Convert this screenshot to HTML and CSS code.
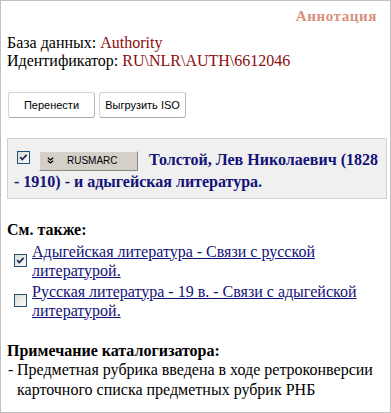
FILE: index.html
```html
<!DOCTYPE html>
<html lang="ru">
<head>
    <meta charset="UTF-8">
    <title>Аннотация</title>
    <link rel="stylesheet" href="styles.css">
</head>
<body>
    <div class="page">
        <div class="head">Аннотация</div>

        <div class="info">
            База данных: <span class="val">Authority</span><br>
            Идентификатор: <span class="val">RU\NLR\AUTH\6612046</span>
        </div>

        <div class="actions">
            <button class="btn">Перенести</button>
            <button class="btn">Выгрузить ISO</button>
        </div>

        <div class="record"><span class="cb cb-on"><svg width="11" height="11" viewBox="0 0 11 11"><path d="M2.2 5.2 L4.3 7.5 L8.6 2.8" fill="none" stroke="#1b2f55" stroke-width="1.8"/></svg></span><span class="marc"><svg class="chev" width="7" height="7" viewBox="0 0 7 7"><path d="M0.8 0.8 L3.5 3 L6.2 0.8 M0.8 3.8 L3.5 6 L6.2 3.8" fill="none" stroke="#000" stroke-width="1.2"/></svg><span>RUSMARC</span></span><span class="title">Толстой, Лев Николаевич (1828 - 1910) - и адыгейская литература.</span></div>

        <div class="sub">См. также:</div>
        <div class="rel">
            <div class="rel-row">
                <span class="cb cb-on"><svg width="11" height="11" viewBox="0 0 11 11"><path d="M2.2 5.2 L4.3 7.5 L8.6 2.8" fill="none" stroke="#1b2f55" stroke-width="1.8"/></svg></span>
                <a href="#" class="link">Адыгейская литература - Связи с русской литературой.</a>
            </div>
            <div class="rel-row">
                <span class="cb"></span>
                <a href="#" class="link">Русская литература - 19 в. - Связи с адыгейской литературой.</a>
            </div>
        </div>

        <div class="sub note-head">Примечание каталогизатора:</div>
        <div class="note">
            <span class="dash">-</span>
            <span>Предметная рубрика введена в ходе ретроконверсии карточного списка предметных рубрик РНБ</span>
        </div>
    </div>
</body>
</html>
```

FILE: styles.css
```css
body {
    margin: 0;
    font-family: "Liberation Serif", "Times New Roman", serif;
    font-size: 16px;
    color: #000;
    background: #fff;
}
.page {
    height: 413px;
    box-sizing: border-box;
    border: 1px solid #c0c0c0;
    padding: 7px 3px 0 6px;
}
.head {
    text-align: right;
    padding-right: 10px;
    font-weight: bold;
    font-size: 15px;
    line-height: 16px;
    letter-spacing: 0.6px;
    color: #d9907c;
}
.info {
    margin-top: 10px;
    line-height: 18px;
}
.val {
    color: #8b0d0d;
}
.actions {
    margin-top: 22px;
    margin-left: 1px;
    display: flex;
    gap: 4px;
}
.btn {
    width: 87px;
    height: 26px;
    padding: 0;
    background: #fff;
    border: 1px solid #d4d4d4;
    border-right-color: #b8b8b8;
    border-bottom-color: #a8a8a8;
    border-radius: 3px;
    font-family: "Liberation Sans", Arial, sans-serif;
    font-size: 11px;
    color: #000;
}
.record {
    margin-top: 20px;
    padding: 10px 6px 6px 6px;
    background: #f0f0f0;
    border: 1px solid #d3d1ca;
    font-weight: bold;
    line-height: 21px;
    color: #121278;
}
.cb {
    display: inline-block;
    width: 13px;
    height: 13px;
    box-sizing: border-box;
    border: 1px solid #1c5180;
    background: linear-gradient(135deg, #dcdcd5, #fbfbfa);
    vertical-align: 1px;
    overflow: hidden;
}
.cb svg {
    display: block;
    margin: 0;
}
.record .cb {
    margin: 0 9px 0 3px;
}
.marc {
    display: inline-flex;
    align-items: center;
    width: 99px;
    height: 20px;
    box-sizing: border-box;
    padding-left: 7px;
    margin-right: 11px;
    background: #d4d0c8;
    border: 1px solid;
    border-color: #f4f3ef #8a8780 #8a8780 #f4f3ef;
    font-family: "Liberation Sans", Arial, sans-serif;
    font-weight: normal;
    font-size: 10px;
    line-height: 12px;
    color: #000;
    vertical-align: 1px;
    overflow: hidden;
}
.chev {
    margin-right: 13px;
}
.sub {
    margin-top: 22px;
    font-weight: bold;
    line-height: 18px;
}
.rel {
    margin-top: 3px;
}
.rel-row {
    display: flex;
    align-items: center;
    padding-left: 7px;
    margin-bottom: 2px;
    line-height: 19px;
}
.rel-row .cb {
    flex: none;
    margin-right: 5px;
}
.link {
    color: #121278;
}
.note-head {
    margin-top: 22px;
}
.note {
    display: flex;
    line-height: 20px;
}
.dash {
    flex: none;
    width: 9px;
    padding-left: 1px;
}
```
